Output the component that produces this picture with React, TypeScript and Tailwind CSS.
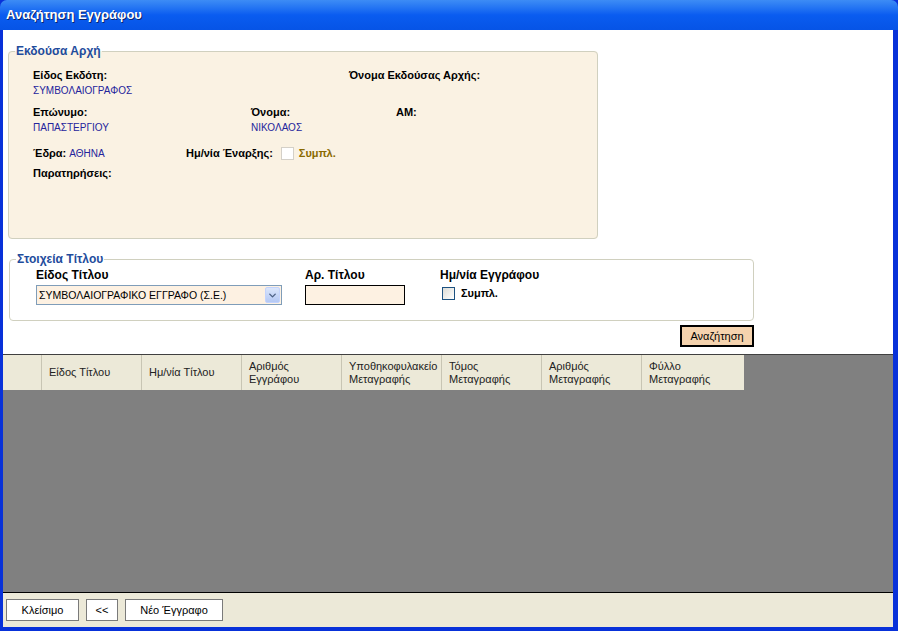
import { ChevronDown } from "lucide-react"

const font = "font-['Liberation_Sans',Arial,sans-serif]"

const Checkbox = ({ disabled }: { disabled?: boolean }) => (
    <span
        className={
            disabled
                ? "inline-block h-[13px] w-[13px] border border-[#d4d0c8] bg-white"
                : "inline-block h-[13px] w-[13px] border border-[#1c5180] bg-gradient-to-br from-[#dcdcd6] to-[#ffffff]"
        }
    />
)

const columns = [
    ["Είδος Τίτλου"],
    ["Ημ/νία Τίτλου"],
    ["Αριθμός", "Εγγράφου"],
    ["Υποθηκοφυλακείο", "Μεταγραφής"],
    ["Τόμος", "Μεταγραφής"],
    ["Αριθμός", "Μεταγραφής"],
    ["Φύλλο", "Μεταγραφής"],
]

export default function App() {
    return (
        <div className={`h-[631px] w-[898px] flex flex-col bg-[#0831d9] ${font} text-[11px] text-black`}>
            {/* title bar */}
            <div className="h-[30px] shrink-0 rounded-t-[7px] bg-gradient-to-b from-[#3d8cf5] via-[#0a5cf0] to-[#0654e6] flex items-center pl-[6px]">
                <span className="text-white font-bold text-[13px] [text-shadow:1px_1px_0_#0a246a]">Αναζήτηση Εγγράφου</span>
            </div>

            <div className="flex-1 flex flex-col ml-[3px] mr-[5px] mb-[4px] bg-white">
                {/* form area */}
                <div className="h-[324px] shrink-0 flex flex-col pl-[5px] pt-[14px]">
                    <fieldset className="w-[590px] h-[195px] rounded-[4px] border border-[#d0d0bf] bg-[#faf2e3]">
                        <legend className="ml-[6px] px-[1px] text-[12px] font-bold text-[#1f4c9c] leading-[15px]">Εκδούσα Αρχή</legend>
                        <div className="pl-[24px] pt-[9px] flex flex-col leading-[15px]">
                            <div className="flex">
                                <div className="w-[316px]">
                                    <div className="font-bold">Είδος Εκδότη:</div>
                                    <div className="text-[10px] text-[#24249c]">ΣΥΜΒΟΛΑΙΟΓΡΑΦΟΣ</div>
                                </div>
                                <div className="font-bold">Όνομα Εκδούσας Αρχής:</div>
                            </div>
                            <div className="flex mt-[7px]">
                                <div className="w-[218px]">
                                    <div className="font-bold">Επώνυμο:</div>
                                    <div className="text-[10px] text-[#24249c]">ΠΑΠΑΣΤΕΡΓΙΟΥ</div>
                                </div>
                                <div className="w-[145px]">
                                    <div className="font-bold">Όνομα:</div>
                                    <div className="text-[10px] text-[#24249c]">ΝΙΚΟΛΑΟΣ</div>
                                </div>
                                <div className="font-bold">AM:</div>
                            </div>
                            <div className="flex items-center mt-[11px]">
                                <div className="w-[153px]">
                                    <span className="font-bold">Έδρα:</span> <span className="text-[10px] text-[#24249c]">ΑΘΗΝΑ</span>
                                </div>
                                <span className="font-bold">Ημ/νία Έναρξης:</span>
                                <span className="ml-[8px] flex"><Checkbox disabled /></span>
                                <span className="ml-[5px] font-bold text-[#8a6a00]">Συμπλ.</span>
                            </div>
                            <div className="font-bold mt-[5px]">Παρατηρήσεις:</div>
                        </div>
                    </fieldset>

                    <fieldset className="mt-[13px] ml-[1px] w-[745px] h-[69px] rounded-[4px] border border-[#d0d0bf]">
                        <legend className="ml-[6px] px-[1px] text-[12px] font-bold text-[#1f4c9c] leading-[15px]">Στοιχεία Τίτλου</legend>
                        <div className="pl-[26px] pt-[1px] flex leading-[14px]">
                            <div className="w-[269px] flex flex-col">
                                <span className="font-bold text-[12px]">Είδος Τίτλου</span>
                                <div className="mt-[3px] h-[20px] w-[246px] border border-[#7f9db9] bg-[#fdf1e2] flex items-center justify-between pl-[2px] pr-[1px]">
                                    <span className="text-[10.5px]">ΣΥΜΒΟΛΑΙΟΓΡΑΦΙΚΟ ΕΓΓΡΑΦΟ (Σ.Ε.)</span>
                                    <span className="h-[16px] w-[15px] rounded-[2px] bg-gradient-to-b from-[#dbe6fb] to-[#b4c8f4] border border-[#c3d3fd] flex items-center justify-center">
                                        <ChevronDown size={11} strokeWidth={3} className="text-[#4d6185]" />
                                    </span>
                                </div>
                            </div>
                            <div className="w-[135px] flex flex-col">
                                <span className="font-bold text-[12px]">Αρ. Τίτλου</span>
                                <div className="mt-[3px] h-[20px] w-[100px] border border-black bg-[#fdf1e2]" />
                            </div>
                            <div className="flex flex-col">
                                <span className="font-bold text-[12px]">Ημ/νία Εγγράφου</span>
                                <div className="mt-[4px] ml-[2px] flex items-center">
                                    <Checkbox />
                                    <span className="ml-[6px] font-bold">Συμπλ.</span>
                                </div>
                            </div>
                        </div>
                    </fieldset>

                    <div className="w-[746px] flex justify-end mt-[4px]">
                        <button className="h-[22px] w-[74px] border-2 border-black bg-[#f5d3ae] text-[11px] text-black">Αναζήτηση</button>
                    </div>
                </div>

                {/* grid */}
                <div className="flex-1 bg-[#808080] border-t border-[#404040] flex flex-col">
                    <div className="flex h-[35px] w-[741px] bg-[#ece9d8]">
                        <div className="w-[39px] border-r border-[#c8c5b4]" />
                        {columns.map((c, i) => (
                            <div
                                key={i}
                                className={`${i === 6 ? "w-[102px]" : "w-[100px] border-r border-[#c8c5b4]"} flex flex-col justify-center pl-[7px] leading-[13px] text-[#222]`}
                            >
                                {c.map((t) => (
                                    <span key={t}>{t}</span>
                                ))}
                            </div>
                        ))}
                    </div>
                </div>

                {/* bottom bar */}
                <div className="h-[35px] shrink-0 border-t border-black bg-[#ece9d8] flex items-center gap-[7px] pl-[3px]">
                    <button className="h-[22px] w-[73px] border border-[#7a7a7a] bg-white text-[11px]">Κλείσιμο</button>
                    <button className="h-[22px] w-[32px] border border-[#7a7a7a] bg-white text-[11px]">&lt;&lt;</button>
                    <button className="h-[22px] w-[98px] border border-[#7a7a7a] bg-white text-[11px]">Νέο Έγγραφο</button>
                </div>
            </div>
        </div>
    )
}
